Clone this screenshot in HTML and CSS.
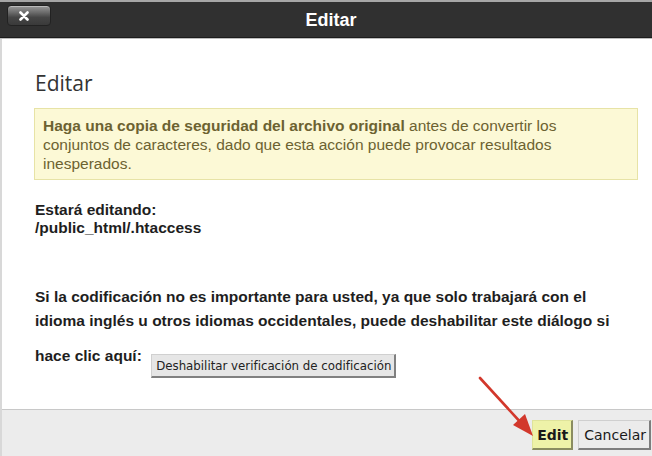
FILE: index.html
```html
<!DOCTYPE html>
<html lang="es">
<head>
<meta charset="utf-8">
<title>Editar</title>
<link rel="stylesheet" href="styles.css">
</head>
<body>
<div class="dialog">
  <div class="titlebar">
    <button class="close" type="button" aria-label="Cerrar">
      <svg width="10" height="10" viewBox="0 0 10 10"><path d="M1.5 1.5 L8.5 8.5 M8.5 1.5 L1.5 8.5" stroke="#fff" stroke-width="2.6" stroke-linecap="round"/></svg>
    </button>
    <div class="title">Editar</div>
  </div>
  <div class="content">
    <h1 class="heading">Editar</h1>
    <div class="warning"><strong>Haga una copia de seguridad del archivo original</strong> antes de convertir los conjuntos de caracteres, dado que esta acción puede provocar resultados inesperados.</div>
    <div class="editing">Estará editando:<br>/public_html/.htaccess</div>
    <p class="note">Si la codificación no es importante para usted, ya que solo trabajará con el idioma inglés u otros idiomas occidentales, puede deshabilitar este diálogo si hace clic aquí: <button class="btn-disable" type="button">Deshabilitar verificación de codificación</button></p>
  </div>
  <div class="footer">
    <button class="btn btn-edit" type="button">Edit</button>
    <button class="btn btn-cancel" type="button">Cancelar</button>
  </div>
  <svg class="arrow" width="652" height="456" viewBox="0 0 652 456">
    <line x1="480" y1="378" x2="523" y2="425" stroke="#d2382c" stroke-width="2.6" stroke-linecap="round"/>
    <polygon points="533,436 513,425 525,414" fill="#d2382c"/>
  </svg>
</div>
</body>
</html>
```

FILE: styles.css
```css
* { box-sizing: border-box; }
html, body { margin: 0; padding: 0; background: #fff; }
body { width: 652px; height: 456px; overflow: hidden; }

.dialog {
  position: relative;
  width: 652px;
  height: 456px;
  display: flex;
  flex-direction: column;
  border-left: 2px solid #d8d8d8;
  font-family: "Liberation Sans", Arial, sans-serif;
}

.titlebar {
  height: 38px;
  flex: none;
  display: flex;
  align-items: center;
  justify-content: center;
  position: relative;
  background: #303030;
  border-top: 2px solid #a6a6a6;
  border-bottom: 1px solid #1c1c1c;
  box-shadow: 0 1px 0 #bdbdbd;
  margin-left: -2px;
}
.title {
  color: #fff;
  font-weight: bold;
  font-size: 18px;
  padding: 1px 0 0 10px;
}
.close {
  position: absolute;
  left: 7px;
  top: 3px;
  width: 44px;
  height: 21px;
  padding: 0 0 0 11px;
  display: flex;
  align-items: center;
  border: 1px solid #222;
  border-radius: 4px;
  background: linear-gradient(#9a9a9a 0%, #6a6a6a 35%, #454545 60%, #3a3a3a 100%);
  box-shadow: inset 0 1px 0 #bbb;
}
.close svg { display: block; }

.content {
  flex: 1;
  padding: 31px 14px 0 32px;
  color: #222;
}
.heading {
  margin: 0;
  font-family: "Open Sans", "Noto Sans", sans-serif;
  font-weight: 400;
  font-size: 21px;
  line-height: 28px;
  color: #333;
  padding-left: 1px;
}
.warning {
  margin-top: 11px;
  background: #fcf9d6;
  border: 1px solid #e7e3a6;
  padding: 7px 10px 6px 8px;
  font-size: 15.5px;
  line-height: 19px;
  color: #6c6231;
}
.warning strong { font-weight: bold; }
.editing {
  margin-top: 21px;
  padding-left: 1px;
  font-size: 15.5px;
  line-height: 18px;
  font-weight: bold;
  color: #1e1e1e;
}
.note {
  margin: 48px 8px 0 0;
  padding-left: 1px;
  font-size: 15.5px;
  line-height: 24px;
  font-weight: bold;
  color: #1e1e1e;
}
.btn-disable {
  display: inline-block;
  margin: 21px 0 0 5px;
  vertical-align: -9px;
  height: 24px;
  padding: 0 3px 0 4px;
  font-family: "DejaVu Sans", Verdana, sans-serif;
  font-size: 11.8px;
  font-weight: normal;
  color: #222;
  background: #e6e6e6;
  border: 1px solid #d0d0d0;
  border-right: 2px solid #808080;
  border-bottom: 2px solid #808080;
  border-radius: 0;
}

.footer {
  height: 47px;
  flex: none;
  display: flex;
  justify-content: flex-end;
  align-items: flex-start;
  gap: 5px;
  padding: 10px 1px 0 0;
  background: #ececec;
  border-top: 1px solid #c8c8c8;
}
.btn {
  height: 30px;
  padding: 0 3px 0 4px;
  font-family: "DejaVu Sans", Verdana, sans-serif;
  font-size: 14px;
  color: #1a1a1a;
  border: 1px solid #cfcfcf;
  border-right: 2px solid #7d7d7d;
  border-bottom: 2px solid #7d7d7d;
  border-radius: 0;
}
.btn-edit {
  font-weight: bold;
  background: #eef2a8;
  border-color: #dfe39a;
  border-right-color: #8a8c60;
  border-bottom-color: #8a8c60;
}
.btn-cancel {
  background: #ebebeb;
  padding: 0 3px 0 5px;
}

.arrow {
  position: absolute;
  left: -2px;
  top: 0;
  pointer-events: none;
}
```
